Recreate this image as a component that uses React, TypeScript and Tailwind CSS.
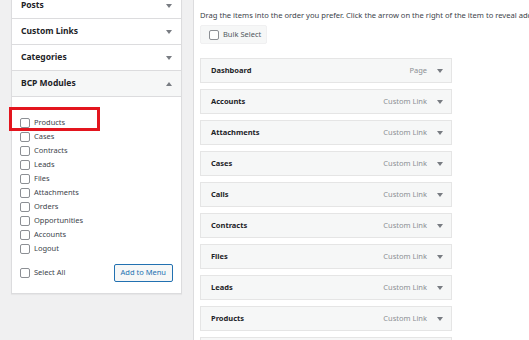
import { ChevronDown } from "lucide-react";

const modules = [
  "Products",
  "Cases",
  "Contracts",
  "Leads",
  "Files",
  "Attachments",
  "Orders",
  "Opportunities",
  "Accounts",
  "Logout",
];

const menuItems = [
  { name: "Dashboard", type: "Page" },
  { name: "Accounts", type: "Custom Link" },
  { name: "Attachments", type: "Custom Link" },
  { name: "Cases", type: "Custom Link" },
  { name: "Calls", type: "Custom Link" },
  { name: "Contracts", type: "Custom Link" },
  { name: "Files", type: "Custom Link" },
  { name: "Leads", type: "Custom Link" },
  { name: "Products", type: "Custom Link" },
  { name: "", type: "" },
];

function Box() {
  return <span className="inline-block w-[10px] h-[10px] rounded-[2px] border border-[#8c8f94] bg-white shrink-0" />;
}

function Caret({ up = false }: { up?: boolean }) {
  return (
    <svg width="6" height="4" viewBox="0 0 6 4" className={up ? "rotate-180" : ""}>
      <path d="M0 0h6L3 4z" fill="#787c82" />
    </svg>
  );
}

function Header({ title, open = false }: { title: string; open?: boolean }) {
  return (
    <div
      className={`h-[26px] flex items-center justify-between pl-[9px] pr-[9px] border-b border-[#dcdcde] ${
        open ? "bg-[#f6f7f7]" : "bg-white"
      }`}
    >
      <span className="text-[8.5px] font-bold text-[#1d2327]">{title}</span>
      <Caret up={open} />
    </div>
  );
}

export default function App() {
  return (
    <div className="w-[529px] h-[340px] overflow-hidden bg-[#f0f0f1] flex font-['Noto_Sans',sans-serif]">
      {/* Left: add menu items accordion */}
      <div className="w-[193px] shrink-0 pl-[11px] pr-[11px]">
        <div className="relative -mt-[8px] bg-white border border-[#dcdcde] shadow-[0_1px_1px_rgba(0,0,0,0.04)]">
          <Header title="Posts" />
          <Header title="Custom Links" />
          <Header title="Categories" />
          <Header title="BCP Modules" open />
          <div className="pt-[19px] pl-[8px] pr-[8px] pb-[11px]">
            {modules.map((m) => (
              <div key={m} className="h-[14px] flex items-center gap-[4px]">
                <Box />
                <span className="text-[7.5px] text-[#3c434a]">{m}</span>
              </div>
            ))}
            <div className="mt-[8px] flex items-center justify-between">
              <div className="flex items-center gap-[4px]">
                <Box />
                <span className="text-[7.5px] text-[#3c434a]">Select All</span>
              </div>
              <button className="h-[18px] px-[6px] rounded-[2px] border border-[#2271b1] bg-[#f6f7f7] text-[7.5px] text-[#2271b1]">
                Add to Menu
              </button>
            </div>
          </div>
          {/* annotation highlight */}
          <div className="absolute left-[-3px] top-[114px] w-[91px] h-[24px] border-[3px] border-[#e3151e]" />
        </div>
      </div>

      {/* Right: menu structure */}
      <div className="flex-1 bg-white border-l border-[#dcdcde] pl-[6px] pt-[10px] whitespace-nowrap overflow-hidden">
        <p className="h-[10px] leading-[10px] text-[7.6px] text-[#3c434a]">
          Drag the items into the order you prefer. Click the arrow on the right of the item to reveal additional configuration options.
        </p>
        <div className="mt-[5px] w-[67px] h-[19px] flex items-center gap-[4px] pl-[8px] bg-[#f6f7f7] border border-[#f0f0f1] rounded-[2px]">
          <Box />
          <span className="text-[7.5px] text-[#50575e]">Bulk Select</span>
        </div>
        <div className="mt-[14px] w-[252px] flex flex-col gap-[6px]">
          {menuItems.map((item, i) => (
            <div
              key={i}
              className="h-[25px] flex items-center justify-between pl-[10px] pr-[8px] bg-[#f6f7f7] border border-[#e5e5e5]"
            >
              <span className="text-[7.5px] font-bold text-[#1d2327]">{item.name}</span>
              {item.type && (
                <div className="flex items-center gap-[10px]">
                  <span className="text-[7.5px] text-[#8c8f94]">{item.type}</span>
                  <Caret />
                </div>
              )}
            </div>
          ))}
        </div>
      </div>
    </div>
  );
}
